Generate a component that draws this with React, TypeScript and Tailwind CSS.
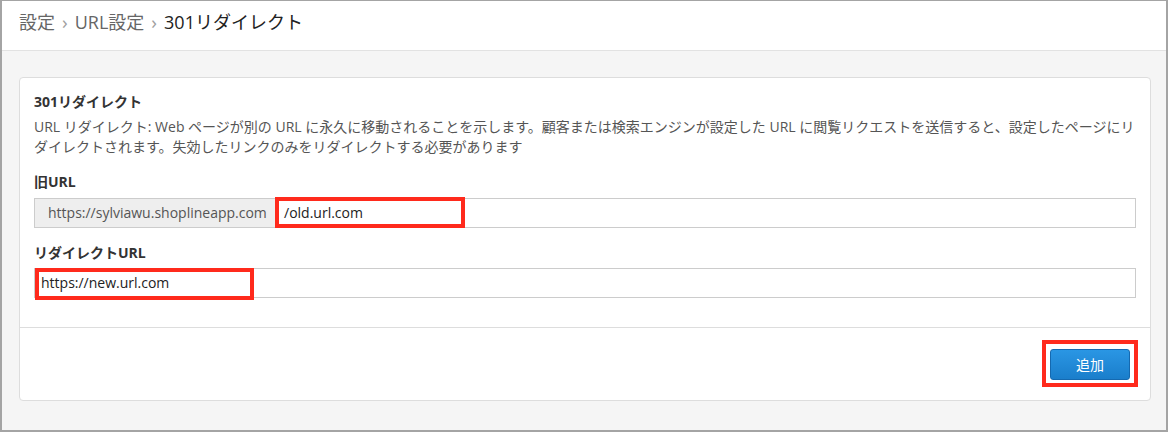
import React from "react";

const font = { fontFamily: '"Open Sans", "Noto Sans CJK JP", sans-serif' };

export default function App() {
  return (
    <div
      className="w-[1168px] h-[432px] border-t border-l-2 border-r-2 border-b-2 border-[#a4a4a4] bg-[#f5f5f5] flex flex-col text-[#333]"
      style={font}
    >
      <div className="h-[50px] shrink-0 bg-white border-b border-[#e2e2e2] flex items-center pl-[17px] text-[18px] pb-[7px]">
        <span className="text-[#666]">設定</span>
        <span className="text-[#a0a0a0] mx-[7px] text-[19px]">›</span>
        <span className="text-[#666]">URL設定</span>
        <span className="text-[#a0a0a0] mx-[7px] text-[19px]">›</span>
        <span className="text-[#222]">301リダイレクト</span>
      </div>
      <div className="pt-[26px] pl-[17px] pr-[15px]">
        <div className="bg-white border border-[#dddddd] rounded-[4px]">
          <div className="px-[14px] pt-[14px] pb-[29px] text-[14px] leading-[20px]">
            <div className="font-bold text-[#333]">301リダイレクト</div>
            <div className="text-[#555] mt-[5px] mr-[-6px]">
              URL リダイレクト: Web ページが別の URL に永久に移動されることを示します。顧客または検索エンジンが設定した URL に閲覧リクエストを送信すると、設定したページにリダイレクトされます。失効したリンクのみをリダイレクトする必要があります
            </div>
            <div className="font-bold mt-[15px] text-[#333]">旧URL</div>
            <div className="mt-[6px] flex h-[30px] border border-[#cccccc]">
              <div className="w-[241px] bg-[#eeeeee] border-r border-[#cccccc] flex items-center pl-[13px] text-[#555]">
                https://sylviawu.shoplineapp.com
              </div>
              <div className="relative flex-1 flex items-center pl-[8px] text-[#222]">
                /old.url.com
                <div className="absolute left-[-1px] top-[-2px] w-[190px] h-[31px] border-[4px] border-[#ff2a1c]" />
              </div>
            </div>
            <div className="font-bold mt-[15px] text-[#333]">リダイレクトURL</div>
            <div className="relative mt-[5px] flex h-[30px] border border-[#cccccc] items-center pl-[6px] text-[#222]">
              https://new.url.com
              <div className="absolute left-[0px] top-[-1px] w-[219px] h-[32px] border-[4px] border-[#ff2a1c]" />
            </div>
          </div>
          <div className="border-t border-[#dddddd] flex justify-end pt-[21px] pb-[20px] pr-[20px]">
            <div className="relative">
              <button className="w-[80px] h-[31px] rounded-[3px] border border-[#1569b0] bg-gradient-to-b from-[#2a96e4] to-[#1a7ecb] text-white text-[14px] flex items-center justify-center">
                追加
              </button>
              <div className="absolute left-[-8px] top-[-9px] w-[96px] h-[47px] border-[4px] border-[#ff2a1c]" />
            </div>
          </div>
        </div>
      </div>
    </div>
  );
}
